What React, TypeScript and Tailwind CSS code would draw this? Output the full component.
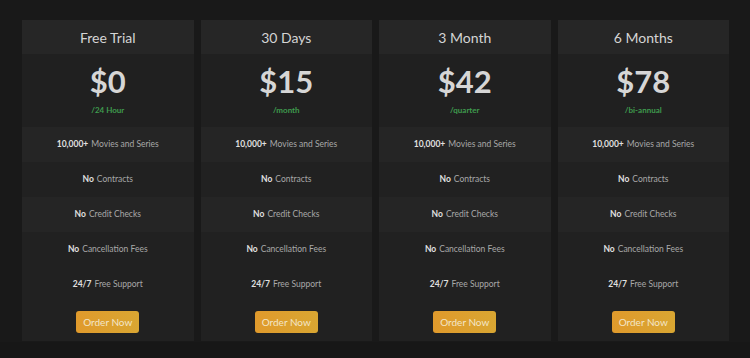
import React from 'react';

interface Plan {
  name: string;
  price: string;
  period: string;
}

const plans: Plan[] = [
  { name: 'Free Trial', price: '$0', period: '/24 Hour' },
  { name: '30 Days', price: '$15', period: '/month' },
  { name: '3 Month', price: '$42', period: '/quarter' },
  { name: '6 Months', price: '$78', period: '/bi-annual' },
];

const features = [
  { strong: '10,000+', rest: 'Movies and Series', bg: 'bg-[#252525]' },
  { strong: 'No', rest: 'Contracts', bg: 'bg-[#212121]' },
  { strong: 'No', rest: 'Credit Checks', bg: 'bg-[#252525]' },
  { strong: 'No', rest: 'Cancellation Fees', bg: 'bg-[#212121]' },
  { strong: '24/7', rest: 'Free Support', bg: 'bg-[#212121]' },
];

const PlanCard: React.FC<{ plan: Plan }> = ({ plan }) => {
  return (
    <div className="flex flex-col bg-[#212121]">
      <div className="h-[34px] flex items-center justify-center bg-[#262626] text-[14px] text-[#d4d4d4]">
        {plan.name}
      </div>
      <div className="h-[73px] flex flex-col items-center bg-[#202020]">
        <div className="mt-[8px] text-[31px] leading-[38px] font-bold text-[#d6d6d6]">{plan.price}</div>
        <div className="mt-[5px] text-[8px] leading-[10px] font-bold text-[#3f9b4e]">{plan.period}</div>
      </div>
      {features.map((f, i) => (
        <div key={i} className={`h-[35px] flex items-center justify-center text-[8.5px] ${f.bg}`}>
          <span className="font-bold text-[#e0e0e0] mr-[3px]">{f.strong}</span>
          <span className="text-[#a8a8a8]">{f.rest}</span>
        </div>
      ))}
      <div className="h-[39px] flex items-start justify-center pt-[9px]">
        <button className="h-[22px] w-[63px] rounded-[3px] bg-gradient-to-r from-[#e09a2c] to-[#d9a632] text-[10px] text-[#f3e6c8]">
          Order Now
        </button>
      </div>
    </div>
  );
};

export default function App() {
  return (
    <div
      className="w-[750px] h-[358px] bg-[#191919] flex flex-col"
      style={{ fontFamily: 'Lato, "Noto Sans", sans-serif' }}
    >
      <div className="grid grid-cols-4 gap-[7px] pl-[22px] pr-[21px] pt-[20px]">
        {plans.map(p => (
          <PlanCard key={p.name} plan={p} />
        ))}
      </div>
      <div className="flex-1 mt-[1px] bg-[#171717]" />
    </div>
  );
}
